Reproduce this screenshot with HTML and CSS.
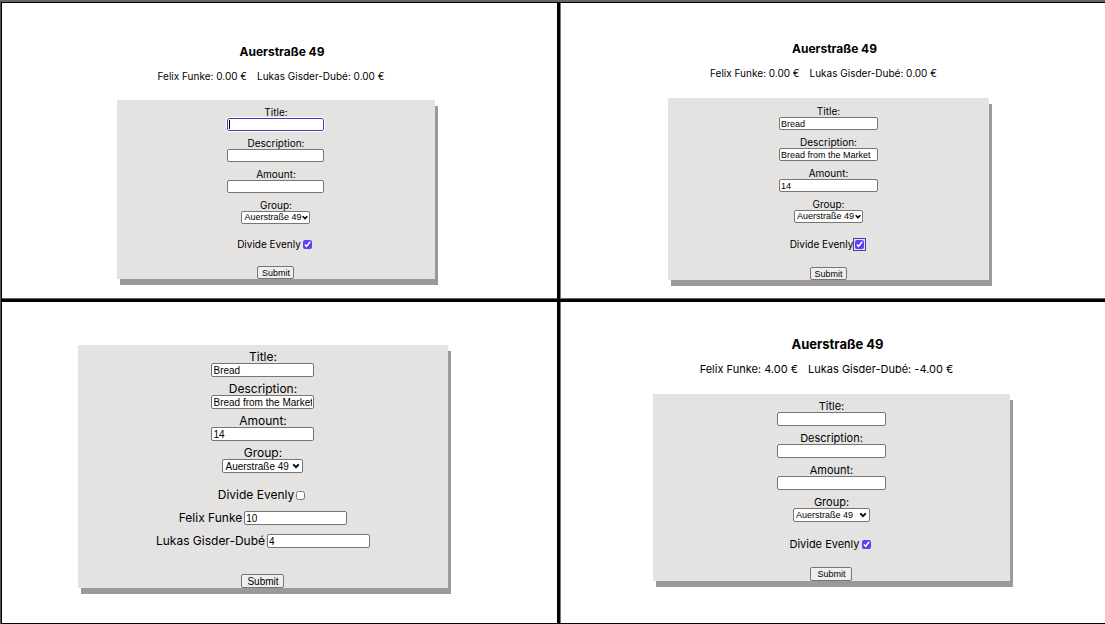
FILE: index.html
```html
<!DOCTYPE html>
<html lang="en">
<head>
<meta charset="utf-8">
<title>Auerstraße 49</title>
<link rel="stylesheet" href="styles.css">
</head>
<body>
<main class="board">
  <section class="panel panel-empty">
    <h1 class="title">Auerstraße 49</h1>
    <p class="balances"><span>Felix Funke: 0.00 €</span><span>Lukas Gisder-Dubé: 0.00 €</span></p>
    <form class="card">
      <div class="field"><label for="t1">Title:</label><input class="text is-focused" id="t1" type="text"></div>
      <div class="field"><label for="d1">Description:</label><input class="text" id="d1" type="text"></div>
      <div class="field"><label for="a1">Amount:</label><input class="text" id="a1" type="text"></div>
      <div class="field"><label for="g1">Group:</label><div class="picker"><select class="select" id="g1"><option>Auerstraße 49</option></select><svg class="chevron" viewBox="0 0 6 5" aria-hidden="true"><path d="M0.7 1.2 3 3.5 5.3 1.2"/></svg></div></div>
      <div class="check"><label for="e1">Divide Evenly</label><input class="box" id="e1" type="checkbox" checked></div>
      <button class="submit" type="button">Submit</button>
    </form>
  </section>

  <section class="panel panel-filled">
    <h1 class="title">Auerstraße 49</h1>
    <p class="balances"><span>Felix Funke: 0.00 €</span><span>Lukas Gisder-Dubé: 0.00 €</span></p>
    <form class="card">
      <div class="field"><label for="t2">Title:</label><input class="text" id="t2" type="text" value="Bread"></div>
      <div class="field"><label for="d2">Description:</label><input class="text" id="d2" type="text" value="Bread from the Market"></div>
      <div class="field"><label for="a2">Amount:</label><input class="text" id="a2" type="text" value="14"></div>
      <div class="field"><label for="g2">Group:</label><div class="picker"><select class="select" id="g2"><option>Auerstraße 49</option></select><svg class="chevron" viewBox="0 0 6 5" aria-hidden="true"><path d="M0.7 1.2 3 3.5 5.3 1.2"/></svg></div></div>
      <div class="check"><label for="e2">Divide Evenly</label><input class="box is-ringed" id="e2" type="checkbox" checked></div>
      <button class="submit" type="button">Submit</button>
    </form>
  </section>

  <section class="panel panel-split">
    <form class="card">
      <div class="field"><label for="t3">Title:</label><input class="text" id="t3" type="text" value="Bread"></div>
      <div class="field"><label for="d3">Description:</label><input class="text" id="d3" type="text" value="Bread from the Market"></div>
      <div class="field"><label for="a3">Amount:</label><input class="text" id="a3" type="text" value="14"></div>
      <div class="field"><label for="g3">Group:</label><div class="picker"><select class="select" id="g3"><option>Auerstraße 49</option></select><svg class="chevron" viewBox="0 0 6 5" aria-hidden="true"><path d="M0.7 1.2 3 3.5 5.3 1.2"/></svg></div></div>
      <div class="check"><label for="e3">Divide Evenly</label><input class="box" id="e3" type="checkbox"></div>
      <div class="share"><label for="f3">Felix Funke</label><input class="text" id="f3" type="text" value="10"></div>
      <div class="share"><label for="l3">Lukas Gisder-Dubé</label><input class="text" id="l3" type="text" value="4"></div>
      <button class="submit" type="button">Submit</button>
    </form>
  </section>

  <section class="panel panel-done">
    <h1 class="title">Auerstraße 49</h1>
    <p class="balances"><span>Felix Funke: 4.00 €</span><span>Lukas Gisder-Dubé: -4.00 €</span></p>
    <form class="card">
      <div class="field"><label for="t4">Title:</label><input class="text" id="t4" type="text"></div>
      <div class="field"><label for="d4">Description:</label><input class="text" id="d4" type="text"></div>
      <div class="field"><label for="a4">Amount:</label><input class="text" id="a4" type="text"></div>
      <div class="field"><label for="g4">Group:</label><div class="picker"><select class="select" id="g4"><option>Auerstraße 49</option></select><svg class="chevron" viewBox="0 0 6 5" aria-hidden="true"><path d="M0.7 1.2 3 3.5 5.3 1.2"/></svg></div></div>
      <div class="check"><label for="e4">Divide Evenly</label><input class="box" id="e4" type="checkbox" checked></div>
      <button class="submit" type="button">Submit</button>
    </form>
  </section>
</main>
</body>
</html>
```
FILE: styles.css
```css
* { box-sizing: border-box; }

body {
  margin: 0;
  font-family: Inter, "Liberation Sans", sans-serif;
  color: #000;
  background: #000;
}

.board {
  display: grid;
  grid-template-columns: 555fr 545fr;
  grid-template-rows: 296fr 321fr;
  gap: 3px;
  min-height: 100vh;
  padding: 1px 0 1px 1px;
  border-top: 2px solid #666;
  border-left: 1px solid #555;
}

.panel {
  --text: 10px;
  --control: 9px;
  --line: 12px;
  --input-w: 97px;
  --input-h: 13px;
  --select-w: 69px;
  --submit-w: 37px;
  display: flex;
  flex-direction: column;
  align-items: center;
  background: #fff;
  font-size: var(--text);
  line-height: var(--line);
}

.panel-empty,
.panel-filled { border-bottom: 1px solid #666; }

.panel-filled,
.panel-done { border-left: 1px solid #777; }

.panel-empty { padding: 41px 7px 0 0; }

.panel-filled {
  --input-w: 99px;
  padding: 38px 9px 0 0;
}

.panel-split {
  --text: 12px;
  --control: 10px;
  --input-w: 103px;
  --input-h: 14px;
  --select-w: 81px;
  --submit-w: 43px;
  padding: 43px 33px 0 0;
}

.panel-done {
  --text: 11px;
  --input-w: 109px;
  --input-h: 14px;
  --select-w: 77px;
  --submit-w: 42px;
  padding: 34px 3px 0 0;
}

.title {
  margin: 0;
  padding-left: 12px;
  font-size: 12px;
  line-height: 16px;
  font-weight: 700;
}

.panel-done .title { font-size: 13px; }

.balances {
  display: flex;
  margin: 10px 0 0;
}

.panel-done .balances { margin-top: 11px; }

.balances span { margin-right: 10px; }

.card {
  display: flex;
  flex-direction: column;
  align-items: center;
  width: 58%;
  margin-top: 18px;
  padding-top: 6px;
  background: #e4e3e2;
  box-shadow: 3px 6px 0 #9b9999;
}

.panel-filled .card {
  width: 60%;
  margin-top: 19px;
  padding-top: 7px;
}

.panel-split .card {
  width: 71%;
  margin-top: 0;
}

.panel-done .card {
  width: 66%;
  margin-top: 19px;
  padding-top: 6px;
}

.field {
  display: flex;
  flex-direction: column;
  align-items: center;
  margin-bottom: 6px;
}

.text,
.select,
.submit {
  height: var(--input-h);
  margin: 0;
  border: 1px solid #767676;
  border-radius: 2px;
  font-family: "Liberation Sans", Arial, sans-serif;
  font-size: var(--control);
  color: #000;
}

.text {
  width: var(--input-w);
  padding: 0 1px;
  background: #fff;
}

.text.is-focused {
  border-color: #4a35c4;
  outline: 1px solid #fff;
  background: linear-gradient(#000, #000) 1px center / 1px 9px no-repeat #fff;
}

.picker {
  position: relative;
  display: flex;
}

.select {
  appearance: none;
  width: var(--select-w);
  padding: 0 0 0 2px;
  background: #fff;
  line-height: 11px;
}

.chevron {
  position: absolute;
  top: 4px;
  right: 2px;
  width: 6px;
  height: 5px;
  fill: none;
  stroke: #000;
  stroke-width: 1.6;
  pointer-events: none;
}

.panel-split .chevron,
.panel-done .chevron {
  right: 3px;
  width: 8px;
  height: 6px;
}

.check {
  display: flex;
  align-items: center;
  gap: 2px;
  margin: 8px 0 16px;
}

.panel-filled .check { margin: 9px 0 17px; }

.panel-done .check { margin: 10px 0 17px; }

.panel-split .check { margin: 10px 0 10px; }

.box {
  width: 9px;
  height: 9px;
  margin: 0 3px 0 0;
  accent-color: #5a3ff5;
}

.box.is-ringed {
  outline: 1px solid #4a35c4;
  outline-offset: 1px;
}

.share {
  display: flex;
  align-items: center;
  gap: 2px;
  margin-bottom: 9px;
}

.submit {
  width: var(--submit-w);
  padding: 0;
  background: #efefef;
}

.panel-split .submit { margin-top: 17px; }
```
